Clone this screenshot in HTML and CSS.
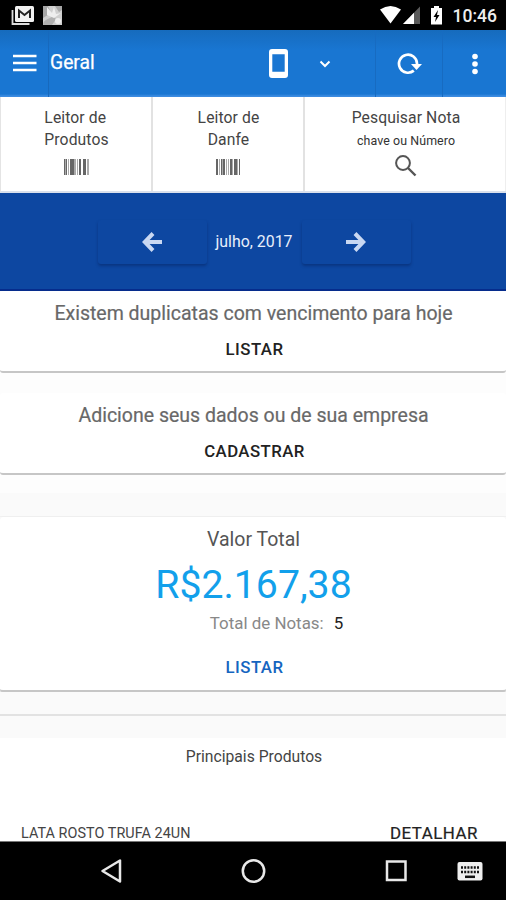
FILE: index.html
```html
<!DOCTYPE html>
<html lang="pt-BR">
<head>
<meta charset="utf-8">
<title>Geral</title>
<link rel="stylesheet" href="styles.css">
</head>
<body>
<div class="screen">
  <div class="status">
    <svg class="status-left" width="64" height="30" viewBox="0 0 64 30">
      <path d="M12.500 10v14h17" fill="none" stroke="#ddd" stroke-width="1.800"/>
      <rect x="15" y="6" width="19" height="16" rx="1.500" fill="#f2f2f2"/>
      <path d="M19 18V10.500l5.500 4.500 5.500-4.500V18" fill="none" stroke="#222" stroke-width="2"/>
      <rect x="43" y="6" width="19" height="19" fill="#cfcfcf"/>
      <path d="M43 6h5l3 7-8 5zM55 6l4 6 3-2V6z" fill="#a6a6a6"/>
      <path d="M43 25c1-7 6-5 10-9l3 3-4 6z" fill="#b0b0b0"/>
      <path d="M47 7l5 6 2-6 2 7 5-1-7 5-7-3z" fill="#eee"/>
      <circle cx="58" cy="21" r="3" fill="#eee"/>
    </svg>
    <div class="status-right">
      <svg width="64" height="30" viewBox="0 0 64 30">
        <path d="M0 9.500Q10.500 2.500 21 9.500L10.500 23.500z" fill="#fff"/>
        <path d="M40 6.500V24H23z" fill="#5a5a5a"/>
        <path d="M34 12.700V24H23z" fill="#fff"/>
        <path d="M54 6h5v2h3v16.500H51V8h3z" fill="#fff"/>
        <path d="M58 10l-4.500 7h2.500l-1 5 4.500-7H57z" fill="#000"/>
      </svg>
      <span class="clock">10:46</span>
    </div>
  </div>

  <header class="toolbar">
    <div class="tool menu">
      <svg width="24" height="18" viewBox="0 0 24 18"><path d="M0 2h23.500M0 9h23.500M0 16h23.500" stroke="#fff" stroke-width="2.700"/></svg>
    </div>
    <h1 class="title">Geral</h1>
    <div class="tool device">
      <svg width="19" height="29" viewBox="0 0 19 29"><path fill-rule="evenodd" fill="#fff" d="M3 0h13a3 3 0 0 1 3 3v23a3 3 0 0 1-3 3H3a3 3 0 0 1-3-3V3a3 3 0 0 1 3-3zM3.300 5.300v17.500h12.400V5.300z"/></svg>
      <svg width="12" height="8" viewBox="0 0 12 8"><path d="M1.500 1.500L6 6l4.500-4.500" fill="none" stroke="#fff" stroke-width="2"/></svg>
    </div>
    <div class="tool refresh">
      <svg width="26" height="22" viewBox="0 0 26 22"><path d="M16.800 17.600A9 9 0 1 1 20 10.500V12" fill="none" stroke="#fff" stroke-width="2.700"/><path d="M14 11h11l-5.500 6z" fill="#fff"/></svg>
    </div>
    <div class="tool more">
      <svg width="8" height="22" viewBox="0 0 8 22" fill="#fff"><circle cx="4" cy="3.500" r="2.800"/><circle cx="4" cy="11" r="2.800"/><circle cx="4" cy="18.500" r="2.800"/></svg>
    </div>
  </header>

  <nav class="actions">
    <div class="action">
      <span class="label products-label">Leitor de<br>Produtos</span>
      <svg width="27" height="16" viewBox="0 0 27 16"><path fill="#666" d="M1 0h1v16H1zM3 0h1v16H3zM7 0h4v16H7zM16 0h2v16h-2zM20 0h3v16h-3z"/><path fill="#aaa" d="M2 0h1v16H2zM5 0h1v16H5zM11 0h2v16h-2zM14 0h1v16h-1zM24 0h2v16h-2z"/></svg>
    </div>
    <div class="action">
      <span class="label">Leitor de<br>Danfe</span>
      <svg width="27" height="16" viewBox="0 0 27 16"><path fill="#666" d="M1 0h2v16H1zM6 0h1v16H6zM8 0h2v16H8zM15 0h2v16h-2zM19 0h3v16h-3zM24 0h1v16h-1z"/><path fill="#aaa" d="M4 0h1v16H4zM7 0h1v16H7zM11 0h1v16h-1zM13 0h1v16h-1zM17 0h1v16h-1zM22 0h1v16h-1z"/></svg>
    </div>
    <div class="action search">
      <span class="label">Pesquisar Nota</span>
      <span class="hint">chave ou Número</span>
      <svg width="22" height="22" viewBox="0 0 22 22" fill="none" stroke="#555"><circle cx="8" cy="8" r="6.900" stroke-width="2"/><path d="M13 13l7.500 7.500" stroke-width="2.400"/></svg>
    </div>
  </nav>

  <section class="period">
    <div class="step"><svg width="20" height="20" viewBox="0 0 20 20" fill="none" stroke="#c9d8f2" stroke-width="4"><path d="M11 1.500L2.800 10l8.200 8.500M3.500 10H20"/></svg></div>
    <span class="month">julho, 2017</span>
    <div class="step"><svg width="20" height="20" viewBox="0 0 20 20" fill="none" stroke="#c9d8f2" stroke-width="4"><path d="M9 1.500l8.200 8.500L9 18.500M16.500 10H0"/></svg></div>
  </section>

  <section class="card notice">
    <p class="message">Existem duplicatas com vencimento para hoje</p>
    <span class="button">LISTAR</span>
  </section>
  <section class="card notice company-card">
    <p class="message">Adicione seus dados ou de sua empresa</p>
    <span class="button">CADASTRAR</span>
  </section>

  <div class="band"></div>

  <section class="card total">
    <h2 class="total-title">Valor Total</h2>
    <div class="amount">R$2.167,38</div>
    <div class="count"><span class="count-label">Total de Notas:</span><span class="count-value">5</span></div>
    <span class="button primary">LISTAR</span>
  </section>

  <div class="divider"></div>

  <section class="products">
    <h3 class="products-title">Principais Produtos</h3>
    <div class="product"><span class="product-name">LATA ROSTO TRUFA 24UN</span><span class="detail">DETALHAR</span></div>
  </section>

  <footer class="navbar">
    <svg width="506" height="58" viewBox="0 0 506 58" fill="none" stroke="#e8e8e8" stroke-width="2.500">
      <path d="M102.500 29L120 18.500v21z" stroke-linejoin="round"/>
      <circle cx="253.500" cy="29" r="10.700"/>
      <rect x="387" y="19.500" width="18.500" height="18.500"/>
      <rect x="457.500" y="20" width="25" height="18.500" rx="2" fill="#eee" stroke="none"/>
      <path d="M461 25.500h18M461 30h18" stroke="#111" stroke-dasharray="2 1.200"/>
      <path d="M465 34.800h10" stroke="#111"/>
    </svg>
  </footer>
</div>
</body>
</html>
```
FILE: styles.css
```css
* { box-sizing: border-box; }
body { margin: 0; background: #fdfdfd; font-family: Roboto, "Liberation Sans", sans-serif; color: #333; }
h1, h2, h3, p { margin: 0; font-weight: 400; }
svg { display: block; flex: none; }
.screen { width: 506px; height: 900px; display: flex; flex-direction: column; overflow: hidden; white-space: nowrap; }
.screen > * { flex: none; }

.status { height: 30px; background: #000; color: #fff; display: flex; justify-content: space-between; }
.status-right { display: flex; gap: 8px; padding-right: 9px; }
.status-right svg { margin-right: 1px; }
.clock { font-size: 17.500px; font-weight: 500; line-height: 32px; color: #eee; }

.toolbar { height: 67px; display: flex; color: #fff; background: linear-gradient(#166bbd, #1976d2 30%, #1976d2 64px, #3c8be0 66px); }
.tool { display: flex; align-items: center; justify-content: center; }
.menu { width: 49px; padding-left: 2px; padding-bottom: 1px; border-right: 1px solid #1769bd; }
.title { flex: 1; padding-left: 1px; font-size: 19.300px; line-height: 66px; -webkit-text-stroke: .25px #fff; }
.device { width: 107px; padding-left: 1px; justify-content: flex-start; gap: 31px; }
.refresh { width: 67px; padding-left: 2px; border-left: 1px solid #176bc1; }
.more { width: 64px; border-left: 1px solid #176bc1; }

.actions { height: 96px; display: flex; background: #fff; border-bottom: 2px solid #d9e0ec; border-left: 1px solid #e4e4e4; }
.action { width: 152px; padding: 10px 0 0 1px; display: flex; flex-direction: column; align-items: center; border-right: 2px solid #e2e2e2; text-align: center; }
.action:last-child { flex: 1; padding-left: 2px; border-right: 1px solid #eee; }
.label { font-size: 15.700px; line-height: 22px; letter-spacing: .1px; color: #444; }
.products-label { text-align: left; }
.action:not(.search) .label { margin-bottom: 8px; }
.hint { font-size: 12.400px; line-height: 24px; letter-spacing: .1px; margin-bottom: 2px; }

.period { height: 98px; padding-left: 2px; background: #0d47a1; border-bottom: 2px solid #062c8c; display: flex; justify-content: center; align-items: center; color: #e8effb; }
.step { width: 109px; height: 44px; margin-top: 2px; border-radius: 3px; display: flex; align-items: center; justify-content: center; box-shadow: 0 2px 3px rgba(0, 20, 70, .35); }
.month { width: 95px; text-align: center; font-size: 15.900px; }

.card { background: #fff; display: flex; flex-direction: column; align-items: center; border-bottom: 2px solid #c6c6c6; border-radius: 3px; }
.notice { height: 82px; padding: 10px 0 0 1px; }
.company-card { margin-top: 20px; }
.message { color: #686868; font-size: 19.500px; line-height: 26px; -webkit-text-stroke: .2px #686868; }
.button { font-size: 16.800px; line-height: 22px; font-weight: 500; letter-spacing: .45px; color: #222; margin-top: 11px; padding-left: 2px; }
.band { height: 24px; margin-top: 18px; background: #fafafa; border-bottom: 1px solid #f1f1f1; }
.total { height: 175px; padding: 10px 0 0 1px; box-shadow: 0 1px 2px #ccc; }
.total-title { font-size: 19.500px; line-height: 26px; color: #555; }
.amount { font-size: 39.200px; line-height: 48px; margin-top: 8px; color: #12a0eb; }
.count { display: flex; gap: 10px; margin-left: 46px; margin-top: 2px; font-size: 16.900px; line-height: 24px; }
.count-label { color: #888; }
.count-value { color: #222; }
.total .button { margin-top: 21px; color: #1565c0; }
.divider { height: 46px; background: linear-gradient(#fafafa 22px, #e2e2e2 22px, #e2e2e2 24px, #fafafa 24px); }
.products { height: 104px; background: #fff; border-bottom: 1px solid #777; }
.products-title { padding: 8px 0 0 2px; font-size: 15.700px; line-height: 22px; text-align: center; color: #444; }
.product { display: flex; justify-content: space-between; align-items: center; padding: 0 28px 0 21px; margin-top: 54px; height: 22px; }
.product-name { font-size: 14.400px; letter-spacing: .05px; color: #444; }
.detail { font-size: 16.900px; color: #222; letter-spacing: .5px; -webkit-text-stroke: .2px #222; }
.navbar { height: 58px; background: #000; }
```
